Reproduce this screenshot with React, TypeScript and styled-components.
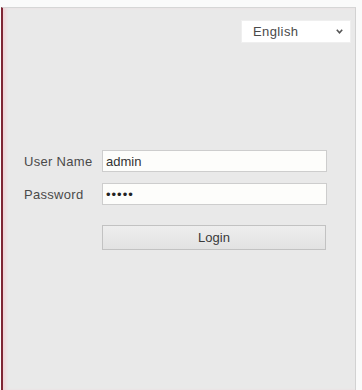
import React, { FC } from 'react';
import styled, { createGlobalStyle } from 'styled-components';

const GlobalStyle = createGlobalStyle`
  html, body {
    margin: 0;
    padding: 0;
    background: #ffffff;
    font-family: "Liberation Sans", Arial, sans-serif;
  }
`;

const Page = styled.div`
  width: 362px;
  height: 390px;
  padding-top: 7px;
  padding-left: 1px;
  box-sizing: border-box;
  background: #fafafa;
  overflow: hidden;
`;

const Panel = styled.div`
  width: 355px;
  height: 383px;
  box-sizing: border-box;
  background: #e9e9e9;
  border-top: 1px solid #d6d6d6;
  border-right: 1px solid #d2d2d2;
  border-left: 2px solid #7f2534;
  box-shadow: inset 4px 0 4px -2px #f1cdd2;
  display: flex;
  flex-direction: column;
  padding: 12px 4px 0 21px;
`;

const TopBar = styled.div`
  display: flex;
  justify-content: flex-end;
`;

const LangSelect = styled.div`
  width: 110px;
  height: 23px;
  box-sizing: border-box;
  background: #ffffff;
  border: 1px solid #efefef;
  display: flex;
  align-items: center;
  justify-content: space-between;
  padding: 0 7px 0 11px;
  font-size: 13px;
  letter-spacing: 0.4px;
  color: #4a4a4a;
`;

const Form = styled.div`
  margin-top: 107px;
  display: grid;
  grid-template-columns: 78px 225px;
  row-gap: 11px;
  align-items: center;
`;

const Label = styled.label`
  font-size: 13px;
  letter-spacing: 0.3px;
  color: #4a4a4a;
`;

const Field = styled.input`
  width: 225px;
  height: 22px;
  box-sizing: border-box;
  border: 1px solid #cdcdcd;
  background: #fdfdfb;
  padding: 0 3px;
  font-family: "Liberation Sans", Arial, sans-serif;
  font-size: 13px;
  color: #333;
  outline: none;

  &[type='password'] {
    letter-spacing: 1px;
    color: #222;
  }
`;

const ButtonCell = styled.div<{ $top: number }>`
  grid-column: 2;
  margin-top: ${(p) => p.$top}px;
`;

const LoginButton = styled.button`
  width: 224px;
  height: 25px;
  box-sizing: border-box;
  border: 1px solid #c2c2c2;
  background: linear-gradient(#eeeeee, #e2e2e2);
  font-family: "Liberation Sans", Arial, sans-serif;
  font-size: 13px;
  color: #3a3a3a;
  padding: 0;
`;

const Chevron: FC = () => (
  <svg width="7" height="5" viewBox="0 0 7 5">
    <polyline points="0.8,0.8 3.5,3.8 6.2,0.8" fill="none" stroke="#555" strokeWidth="1.6" />
  </svg>
);

const App: FC = () => (
  <>
    <GlobalStyle />
    <Page>
      <Panel>
        <TopBar>
          <LangSelect>
            <span>English</span>
            <Chevron />
          </LangSelect>
        </TopBar>
        <Form>
          <Label>User Name</Label>
          <Field type="text" defaultValue="admin" />
          <Label>Password</Label>
          <Field type="password" defaultValue="admin" />
          <ButtonCell $top={9}>
            <LoginButton>Login</LoginButton>
          </ButtonCell>
        </Form>
      </Panel>
    </Page>
  </>
);

export default App;
